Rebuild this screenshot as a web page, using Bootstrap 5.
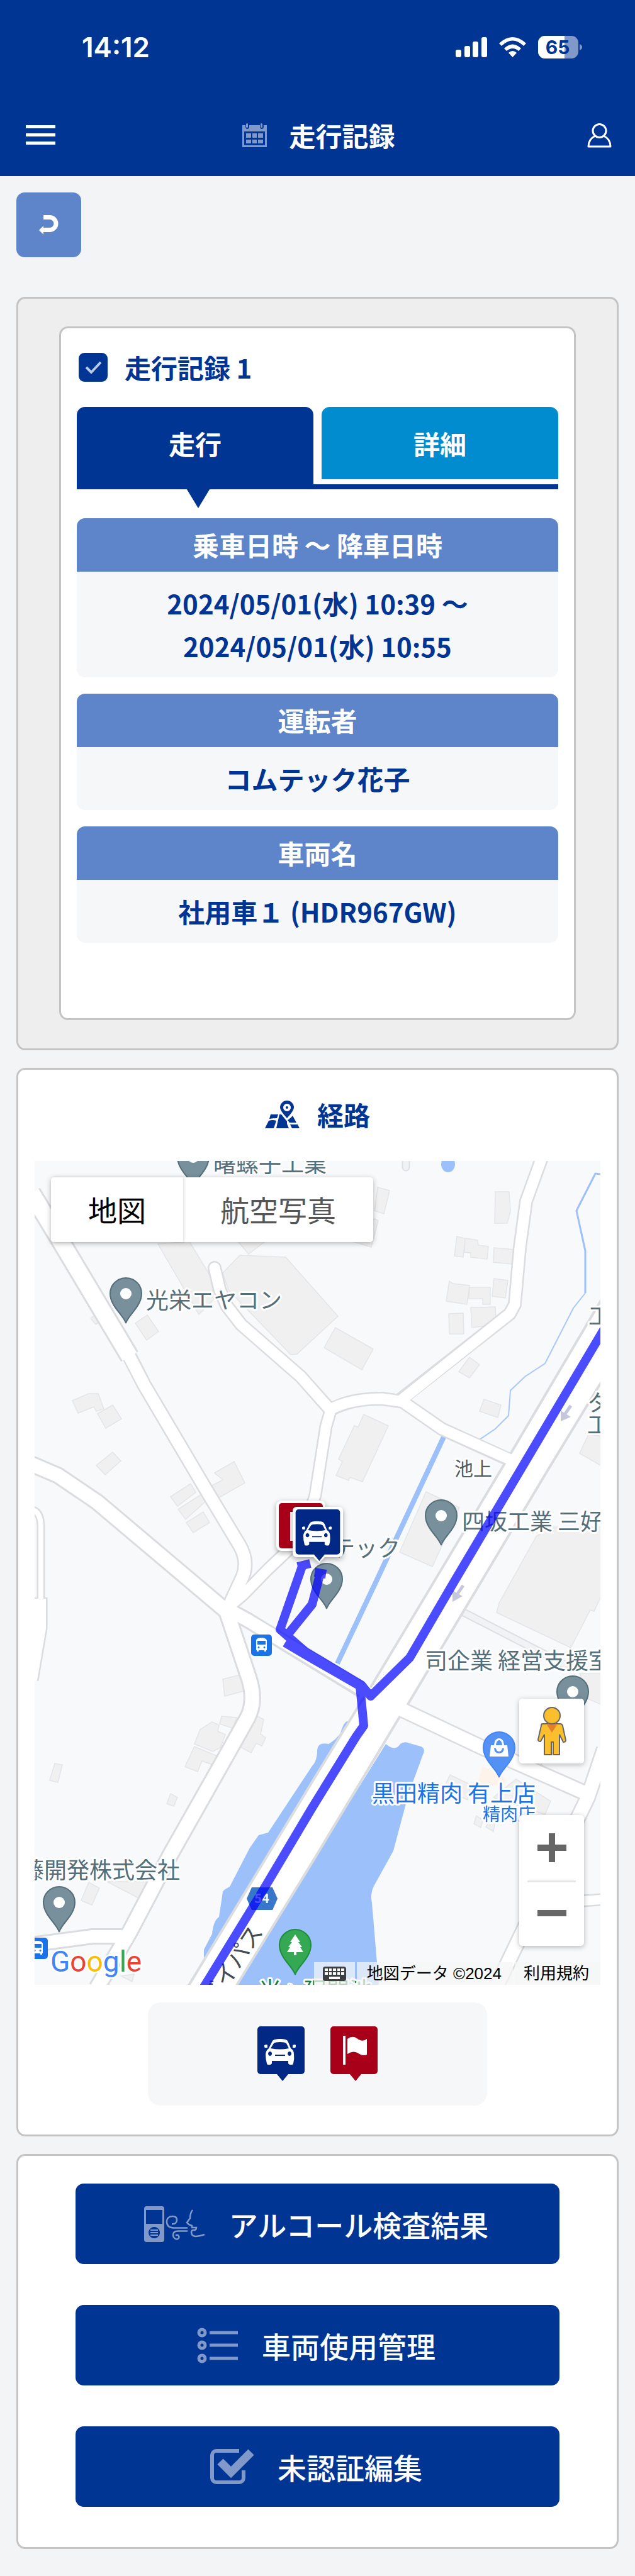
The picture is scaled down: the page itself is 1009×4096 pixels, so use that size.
<!DOCTYPE html>
<html lang="ja">
<head>
<meta charset="utf-8">
<meta name="viewport" content="width=device-width, initial-scale=1">
<title>走行記録</title>
<link href="https://cdn.jsdelivr.net/npm/bootstrap@5.3.0/dist/css/bootstrap.min.css" rel="stylesheet">
<style>
:root{--navy:#003594;--soft:#5e85ca;--line:#c4c4c4;--pale:#f5f7f9}
body{background:#f3f4f6;color:var(--navy);font-family:"Noto Sans CJK JP","Noto Sans",sans-serif;font-size:42px;line-height:68px}
svg{display:block;flex:none}
.topbar{background:var(--navy);color:#fff}
.status{height:150px;padding:0 84px 0 130px;font-family:Inter,sans-serif;font-size:44px;font-weight:600}
.status-icons{gap:19px}
.titlebar{height:130px;padding:0 37px 0 41px}
.titlebar .btn{padding:0;border:0;color:#fff;width:47px}
.title-group{gap:35px}
.ttl{font-size:42px;line-height:68px;font-weight:700;margin:0}
.faded{color:#8099c9}
main{padding:26px 26px 42px}
.btn-back{width:103px;height:103px;background:var(--soft);color:#fff;border-radius:13px;margin-bottom:63px}
.panel{border:3px solid var(--line);border-radius:14px;background:#fff;margin-bottom:28px;color:inherit}
.panel-gray{background:#eee;padding:44px 65px 45px}
.record{border:3px solid var(--line);border-radius:14px;background:#fff;padding:28px 25px 120px}
.record-head{gap:27px;padding-left:3px}
.record .form-check-input{width:46px;height:46px;margin:0;border:0;border-radius:9px;flex:none}
.record .form-check-input:checked{background-color:var(--navy);background-image:url("data:image/svg+xml,%3csvg xmlns='http://www.w3.org/2000/svg' viewBox='0 0 46 46'%3e%3cpath fill='none' stroke='%23b9c9e6' stroke-width='4' d='M12 23l8 8 15-16'/%3e%3c/svg%3e")}
.tabs{border-bottom:8px solid var(--navy);gap:13px;margin:29px 0 46px}
.tabs button{flex:1;height:115px;margin-bottom:8px;border:0;border-radius:13px 13px 0 0;background:#008ccf;color:#fff;font-weight:700;position:relative;padding:0}
.tabs button.active{height:123px;margin-bottom:0;background:var(--navy);padding-bottom:8px}
.tabs button.active::after{content:"";position:absolute;top:100%;left:50%;margin-left:-18px;border:solid transparent;border-width:38px 23px 0;border-top-color:var(--navy)}
.item{margin-bottom:26px;font-weight:700;text-align:center;border-radius:13px;overflow:hidden;background:var(--pale)}
.item:last-child{margin-bottom:0}
.item dt{background:var(--soft);color:#fff;padding:8px 0 9px}
.item dd{margin:0;padding:16px 0}
.route-head{height:145px;gap:28px;padding-bottom:4px}
.route{padding:0 26px 46px}
.gmap{overflow:hidden;line-height:1}
.gmap>svg{width:100%;height:auto}
.ctl{position:absolute;background:#fff;border-radius:5px;box-shadow:0 2px 8px rgba(0,0,0,.28);color:#666}
.ctl button{border:0;background:none;padding:0;color:inherit}
.types{left:26px;top:26px;height:103px;font-size:46px}
.types button{height:100%;padding:0 59px 4px;color:#565656}
.types button:first-child{color:#000;box-shadow:2px 0 4px rgba(0,0,0,.1)}
.pegman{right:26px;bottom:352px;width:103px;height:103px}
.zoomer{right:26px;bottom:62px;width:103px;height:208px}
.zoomer button{height:50%;width:100%}
.zoomer hr{position:absolute;left:13px;right:13px;top:50%;margin:0;border-top:3px solid #e6e6e6;opacity:1}
.legal{position:absolute;right:0;bottom:0;height:36px;gap:3px;font-family:"Liberation Sans","Noto Sans CJK JP",sans-serif;font-size:26px;line-height:36px;color:#000}
.legal>*{background:rgba(245,245,245,.72);color:#000;text-decoration:none;border:0}
.kbd-btn{width:65px;padding:0}
.legal span{padding:0 18px 0 16px}
.legal a{padding:0 18px 0 14px}
.legend-box{background:var(--pale);border-radius:20px;width:60%;margin-top:28px;padding:38px 0 39px;gap:41px}
.actions{padding:44px 91px 64px;gap:65px;margin-bottom:0}
.btn-act{background:var(--navy);color:#fff;height:128px;border-radius:13px;font-size:46px;font-weight:500;gap:38px;padding:0 4px 0 0}
.btn-act:hover,.btn-back:hover{background:var(--navy);color:#fff}
.lbl{font-size:36px;fill:#546e7a;font-weight:400;stroke:#fff;stroke-width:6px;stroke-linejoin:round;paint-order:stroke}
.lbl .area{font-size:30px;fill:#4f5b62}
.lbl .shop{fill:#1a73e8}
.lbl .shop-type{font-size:28px}
.lbl .park{fill:#188038}
.lbl .bypass{fill:#444b50}
.glogo{font-family:Roboto,sans-serif;font-size:46px;stroke:#fff;stroke-width:5px;paint-order:stroke}
.lift{filter:drop-shadow(0 3px 4px rgba(0,0,0,.35))}
.bld{fill:#f0f0f0;stroke:#e3e5e8;stroke-width:1.5}
.water{fill:#9cc0fa}
.road{fill:none;stroke-linejoin:round;stroke-linecap:butt}
</style>
<script src="https://cdn.jsdelivr.net/npm/bootstrap@5.3.0/dist/js/bootstrap.bundle.min.js"></script>
</head>
<body>
<svg width="0" height="0" class="position-absolute" aria-hidden="true">
<defs>
<symbol id="box-pin" viewBox="0 0 75 87"><path d="M5 0h65a5 5 0 0 1 5 5v66a5 5 0 0 1-5 5H49L40 87 31 76H5a5 5 0 0 1-5-5V5a5 5 0 0 1 5-5z"/></symbol>
<symbol id="car" viewBox="0 0 75 87"><path fill="#fff" fill-rule="evenodd" d="M27 21q9-2 18 0 3 1 4 4l4 10q5 3 5 9 1 8-1 15 0 2-2 2h-3q-2 0-3-2v-4H23v4q-1 2-3 2h-3q-2 0-2-2-2-7-2-15 1-6 5-9l5-10q1-3 4-4zm-1 6-5 8q15 3 29 0l-4-8q-2-2-10-2t-10 2zM20 40a3 3.500 0 1 0 .1 0zm31 0a3 3.500 0 1 0 .1 0zM28 45v2h16v-2zM11 30q4-2 5 0v4h-4q-1 0-1-4zm45 0q4-2 5 0 0 4-1 4h-4z"/></symbol>
<symbol id="flag" viewBox="0 0 75 87"><path fill="#fff" d="M20 15h4v46h-4zM27 20q8-6 15-1 9 7 16 1v25q-7 3-15-3-8-4-16 2z"/></symbol>
<symbol id="pin" viewBox="-28 -75 56 77" overflow="visible"><path stroke-width="2" d="M0 0C-3-12-25-27-25-47a25 25 0 0 1 50 0C25-27 3-12 0 0z"/></symbol>
<symbol id="bus" viewBox="0 0 33 34"><rect width="33" height="34" rx="5" fill="#1a73e8"/><path fill="#fff" fill-rule="evenodd" d="M8 9q1-4 8-4t9 4v15q0 1-1 1v2h-3v-2h-9v2H9v-2q-1 0-1-1zm2 1v6h13v-6zm2 9a1.500 1.500 0 1 0 .1 0zm9 0a1.500 1.500 0 1 0 .1 0z"/></symbol>
</defs>
</svg>

<header class="topbar">
  <div class="status d-flex align-items-center justify-content-between">
    <span>14:12</span>
    <div class="status-icons d-flex align-items-center">
      <svg width="50" height="32" fill="#fff"><rect y="20" width="9" height="12" rx="3"/><rect x="14" y="14" width="9" height="18" rx="3"/><rect x="27" y="7" width="9" height="25" rx="3"/><rect x="41" width="9" height="32" rx="3"/></svg>
      <svg width="43" height="32" fill="#fff"><path d="M21.500 32 15 25q6.500-6 13 0zM8 18q13.500-13 27 0l-4 4q-9.500-8-19 0zM0 10Q21.500-10 43 10l-4 4Q21.500-3 4 14z"/></svg>
      <svg width="70" height="36"><defs><clipPath id="cell"><rect width="64" height="36" rx="11"/></clipPath></defs><g clip-path="url(#cell)"><path fill="#8099c9" d="M0 0h64v36H0z"/><path fill="#fff" d="M0 0h42v36H0z"/></g><path fill="#8099c9" d="M66 13q4 2 4 5t-4 5z"/><text x="31" y="29" text-anchor="middle" font-size="30" font-weight="700" fill="#003594">65</text></svg>
    </div>
  </div>
  <div class="titlebar d-flex align-items-center justify-content-between">
    <button class="btn" type="button" aria-label="メニュー"><svg width="47" height="32" fill="currentColor"><path d="M0 0h47v5H0zM0 13h47v5H0zM0 26h47v5H0z"/></svg></button>
    <div class="title-group d-flex align-items-center">
      <svg class="faded" width="39" height="38" fill="currentColor"><path fill-rule="evenodd" d="M0 3h5v2q0 4 3 4t3-4V3h17v2q0 4 3 4t3-4V3h5v35H0zm3 10v22h33V13z"/><rect x="6" width="3" height="7" rx="1.500"/><rect x="29" width="3" height="7" rx="1.500"/><path d="M6 16h8v7H6zm10 0h7v7h-7zm9 0h8v7h-8zM6 26h8v6H6zm10 0h7v6h-7zm9 0h8v6h-8z"/></svg>
      <h1 class="ttl">走行記録</h1>
    </div>
    <button class="btn d-flex justify-content-end" type="button" aria-label="アカウント"><svg width="39" height="39" fill="none" stroke="currentColor" stroke-width="3"><ellipse cx="19.500" cy="12" rx="10.500" ry="10.500"/><path d="M13 20Q2 25 2 37h35q0-12-11-17" stroke-linejoin="round"/></svg></button>
  </div>
</header>

<main>
  <button class="btn btn-back d-flex align-items-center justify-content-center" type="button" aria-label="戻る"><svg width="31" height="31"><path d="M7 3.500h10a10 10 0 0 1 0 20H7" fill="none" stroke="#fff" stroke-width="7"/><path d="m0 24 7-7v14z" fill="#fff"/></svg></button>

  <section class="panel panel-gray">
    <div class="record">
      <div class="record-head d-flex align-items-center">
        <input class="form-check-input" type="checkbox" id="rec1" checked>
        <label class="ttl" for="rec1">走行記録 1</label>
      </div>
      <div class="tabs d-flex" role="tablist">
        <button class="active" type="button" role="tab" aria-selected="true">走行</button>
        <button type="button" role="tab" aria-selected="false">詳細</button>
      </div>
      <dl class="item"><dt>乗車日時 〜 降車日時</dt><dd>2024/05/01(水) 10:39 〜<br>2024/05/01(水) 10:55</dd></dl>
      <dl class="item"><dt>運転者</dt><dd>コムテック花子</dd></dl>
      <dl class="item"><dt>車両名</dt><dd>社用車１ (HDR967GW)</dd></dl>
    </div>
  </section>

  <section class="panel route">
    <div class="route-head d-flex align-items-center justify-content-center">
      <svg width="55" height="44" fill="#003594"><path fill-rule="evenodd" d="M35 28Q24 16 24 11a11 11 0 0 1 22 0q0 5-11 17zm0-23a6 6 0 1 0 .1 0zm0 4a2 2 0 1 1-.1 0z"/><path d="M9 22h12l-2 6q-6 0-12 1zM6 32q6-2 12 0l-4 12H0zM23 22h3l9 11v4l3 7H18zM44 24l6 11H39l-3-4q4-2 8-7zM40 38h12l3 6H43z"/></svg>
      <h2 class="ttl">経路</h2>
    </div>
    <div class="gmap position-relative">
      <svg viewBox="0 0 899 1310" role="img" aria-label="走行経路の地図">
        <rect width="899" height="1310" fill="#f8f9fb"/>
        <g class="bld">
          <path d="M299 178 326 150 399 153 482 247 417 307 407 308 308 205zM196 132 246 128 281 186 284 221 261 244zM323 128 340 148 366 128zM160 258 179 245 197 271 178 285zM89 250 99 243 107 254 97 260zM60 381 86 370 101 370 110 394 98 398 94 391 69 401zM100 402 124 388 138 410 113 425zM98 484 124 463 137 477 112 499zM216 534 248 513 256 527 227 549zM228 554 265 530 272 541 240 570zM241 575 268 558 278 575 252 591zM286 496 317 478 334 512 292 536 282 516 299 507z"/>
          <path d="M540 79 545 42 564 47 555 84zM540 92 546 95 535 137 509 129zM732 49H754L756 80 751 99H731zM671 120 684 123 681 153 667 151zM684 123 704 126 705 134 721 136 719 156 693 153V146L683 145zM730 138 762 141 758 164 729 161zM659 191 665 195 691 198 687 228 654 223zM691 201H724V228H712V219H690zM730 187 752 190 748 218 727 215zM658 243 681 242 682 275H659zM693 233 732 232 733 260 695 265zM478 265 538 299 520 332 460 297zM691 312 707 324 691 345 674 335zM714 379 741 388 736 408 707 398zM523 403 562 421 521 510 501 503 499 508 479 500 489 478 483 474 508 421 514 423zM622 526 675 551 632 645 580 622zM880 435 899 437V484L866 465zM797 597 820 582H899V694L889 716 883 714 852 774 734 718 738 703z"/>
          <path d="M299 824 327 817 332 843 302 851zM254 927 263 904 282 892 293 897 291 907 303 912 295 933 283 939zM294 895 297 883 321 885 315 902zM239 963 254 931 294 948 288 962 266 954 259 971zM327 932 354 883 364 888 359 911 367 917 361 930 352 926 344 941zM24 985 32 958 44 960 37 988zM210 1022 216 1006 227 1012 221 1026zM74 1176 86 1147 103 1156 91 1183zM115 1146H182L169 1174zM137 1296 158 1293 155 1305zM660 976 693 992 688 1016 650 998zM765 983 820 1018 811 1039 729 1012zM702 1041 712 1048 709 1060 698 1054zM725 1045 732 1050 729 1066 717 1059zM866 815H899V864L879 855z"/>
        </g>
        <path fill="#fef3ea" d="M712 962 750 983 745 994 703 990z"/>
        <g class="water">
          <path d="M558 927Q573 940 581 927 588 922 596 926L614 931Q622 935 617 944L594 1007 570 1097 549 1135 539 1153Q533 1165 536 1180L547 1310H322L440 1117z"/>
          <path d="M500 891Q492 888 486 910 478 921 467 927 448 923 449 940 448 955 441 962L371 1068 356 1072 342 1092 310 1154Q300 1159 299 1162L293 1202Q284 1208 282 1229L269 1254V1269L440 989z"/>
          <ellipse cx="657" cy="5" rx="11" ry="13"/>
          <path fill="none" stroke="#9cc0fa" stroke-width="8" d="M650 439 542 670 481 799"/>
          <path fill="none" stroke="#9cc0fa" stroke-width="3" d="M899 21 891 20 861 79 875 143V210"/>
          <path fill="none" stroke="#a8c8fb" stroke-width="2" d="M875 210 856 234 811 322 779 343 756 365 753 405 732 426 707 443"/>
        </g>
        <g fill="none" stroke="#dcdfe3"><path stroke-width="13" stroke-linecap="round" d="M657 705 843 801M590-5V10M796 968 803 950"/><path stroke="#f1f2f4" stroke-width="9" stroke-linecap="round" d="M657 705 843 801M590-5V10M796 968 803 950"/></g>
        <g class="road" stroke="#dadce0">
          <path stroke-width="32" d="M-5 51 40 125 151 311"/>
          <path stroke-width="24" d="M151 311 174 356 272 522 325 610Q340 635 331 660L305 716"/>
          <path stroke-width="28" d="M-5 482 37 500 99 542 305 716 341 824Q352 860 338 886L305 945 214 1106 151 1226 99 1315"/>
          <path stroke-width="26" d="M305 712 338 730 521 842M-5 1246 92 1233H150"/>
          <path stroke-width="21" d="M305 712 331 690 371 649 426 597 446 531 463 422 470 398"/>
          <path stroke-width="22" stroke-linecap="round" d="M286 170 294 204 305 230 328 260 423 343 470 396"/>
          <path stroke-width="22" d="M470 396Q500 378 552 378 568 380 585 383L647 426 752 474M578 382 755 243 763 228 771 138 781 64 806-5"/>
          <path stroke-width="13" d="M-3 555Q9 558 10 580V694"/>
          <path stroke-width="23" d="M9 694V743L-5 825"/>
          <path stroke-width="26" d="M585 873 712 933 875 1005M905 935 879 1012 771 1235 735 1310"/>
          <path stroke-width="20" d="M905 1174 850 1178"/>
          <path stroke-width="4" fill="#fff" d="M905 213 756 466 634 670 535 835 522 855 440 989 243 1314H319L440 1117 580 884 593 864 709 670 814 494 905 344z"/>
        </g>
        <g class="road" stroke="#fff">
          <path stroke-width="26" d="M-5 51 40 125 151 311"/>
          <path stroke-width="19" d="M148 306 174 356 272 522 325 610Q340 635 331 660L305 716"/>
          <path stroke-width="22" d="M-5 482 37 500 99 542 305 716 341 824Q352 860 338 886L305 945 214 1106 151 1226 99 1315"/>
          <path stroke-width="20" d="M305 712 338 730 540 852M-5 1246 92 1233H155"/>
          <path stroke-width="16" d="M305 712 331 690 371 649 426 597 446 531 463 422 470 398"/>
          <path stroke-width="17" stroke-linecap="round" d="M286 170 294 204 305 230 328 260 423 343 470 396"/>
          <path stroke-width="17" d="M468 396Q500 378 552 378 568 380 585 383L647 426 765 479M578 384 755 243 763 228 771 138 781 64 806-5"/>
          <path stroke-width="8" d="M-3 555Q9 558 10 580V700"/>
          <path stroke-width="18" d="M9 696V743L-5 825"/>
          <path stroke-width="21" d="M570 866 712 933 875 1005M905 935 879 1012 771 1235 735 1310"/>
          <path stroke-width="15" d="M905 1174 850 1178"/>
        </g>
        <g fill="#c5c8dc" stroke="#c5c8dc"><path stroke-width="5" d="M852 389 843 402M681 675 672 688"/><path stroke="none" d="M836 397 852 407 836 414zM664 683 680 692 664 701z"/></g>

        <g fill="#78909c" stroke="#546e7a">
          <use href="#pin" x="117" y="183" width="56" height="77"/><use href="#pin" x="224" y="-34" width="56" height="77"/><use href="#pin" x="618" y="536" width="56" height="77"/><use href="#pin" x="436" y="637" width="56" height="77"/><use href="#pin" x="827" y="816" width="56" height="77"/><use href="#pin" x="11" y="1151" width="56" height="77"/>
        </g>
        <g fill="#fff"><circle cx="145" cy="211" r="9"/><circle cx="252" cy="-6" r="9"/><circle cx="646" cy="564" r="9"/><circle cx="464" cy="665" r="9"/><circle cx="855" cy="844" r="9"/><circle cx="39" cy="1179" r="9"/></g>
        <use href="#pin" x="710" y="905" width="56" height="77" fill="#5491f5" stroke="#4285f4"/>
        <path fill="#fff" fill-rule="evenodd" d="M725 929h5q1-11 8-11t8 11h5l2 18h-30zm8 0h10q-1-8-5-8t-5 8zm-3 5q1 8 8 8t8-8h-3q-1 5-5 5t-5-5z"/>
        <use href="#pin" x="386" y="1219" width="56" height="77" fill="#34a853" stroke="#1e8e3e"/>
        <path fill="#fff" d="M414 1230l8 12h-3l6 8h-3l5 8h-11v5h-4v-5h-11l5-8h-3l6-8h-3z"/>
        <use href="#bus" x="344" y="753" width="33" height="34"/><use href="#bus" x="-12" y="1235" width="33" height="34"/>
        <path fill="#3876c9" d="M337 1173 345 1155H378L386 1173 378 1191H345z"/>
        <text x="361" y="1180" text-anchor="middle" font-size="20" font-weight="700" fill="#fff">54</text>
        <g class="lbl">
          <text x="177" y="235">光栄エヤコン</text><text x="284" y="18">曙螺子工業</text><text x="880" y="260">工</text><text x="878" y="398">タ</text><text x="878" y="433">工</text>
          <text x="679" y="587">四坂工業 三好</text><text x="473" y="629">テック</text><text x="620" y="808">司企業 経営支援室</text><text x="-21" y="1141">藤開発株式会社</text>
          <text class="area" x="667" y="500">池上</text>
          <text class="shop" x="536" y="1019">黒田精肉 有上店</text><text class="shop shop-type" x="712" y="1049">精肉店</text>
          <text class="park" x="356" y="1332">米ヶ廻間池</text>
          <text class="bypass" transform="translate(286 1346) rotate(-57)">バイパス</text>
        </g>
        <g fill="none" stroke="#00f" stroke-width="14" stroke-linejoin="round" opacity=".7">
          <path d="M426 642 390 745 430 780 519 833 534 851 596 790 666 670 905 267"/>
          <path d="M418 645 438 640M445 654 463 657M454 655 441 705 403 752M398 766 430 785 517 835 523 898 511 915 440 1030 358 1168 268 1315"/>
        </g>
        <rect class="lift" x="384" y="540" width="78" height="80" rx="8" fill="#fff"/><rect x="388" y="544" width="70" height="72" rx="5" fill="#a90019"/><path fill="#fff" d="M406 558h5v46h-5z"/>
        <path class="lift" fill="#fff" d="M410 557q0-7 7-7h66q7 0 7 7v66q0 7-7 7h-22l-9 9-9-9h-26q-7 0-7-7z"/>
        <use href="#box-pin" x="414" y="554" width="72" height="82" fill="#002884"/><use href="#car" x="414" y="554" width="72" height="82"/>
        <text class="glogo" x="25" y="1289" fill="#4285f4">G<tspan fill="#ea4335">o</tspan><tspan fill="#fbbc05">o</tspan>g<tspan fill="#34a853">l</tspan><tspan fill="#ea4335">e</tspan></text>
      </svg>
      <div class="ctl types d-flex"><button type="button">地図</button><button type="button">航空写真</button></div>
      <button type="button" class="ctl pegman border-0 p-0 d-flex align-items-center justify-content-center" aria-label="ストリートビュー"><svg width="46" height="78" stroke="#666" stroke-width="2"><path fill="#fbbf2d" d="M8 27h28q3 0 4 3l5 23q0 3-4 3l-6-12v32H25V56h-3v20H11V44L5 55q-4 0-4-3l5-22q0-3 2-3z"/><path fill="#e2802d" stroke="none" d="M14 27h18l-9 14z"/><circle cx="23" cy="14" r="13" fill="#fbbf2d"/></svg></button>
      <div class="ctl zoomer"><button type="button" aria-label="拡大" class="d-flex align-items-center justify-content-center"><svg width="46" height="46" fill="currentColor"><path d="M18 0h10v18h18v10H28v18H18V28H0V18h18z"/></svg></button><hr><button type="button" aria-label="縮小" class="d-flex align-items-center justify-content-center"><svg width="46" height="10" fill="currentColor"><path d="M0 0h46v10H0z"/></svg></button></div>
      <div class="legal d-flex"><button type="button" class="kbd-btn d-flex align-items-center justify-content-center" aria-label="キーボード ショートカット"><svg width="37" height="23"><rect width="37" height="23" rx="4" fill="#3c4043"/><path fill="#fff" d="M3 3h5v4H3zm7 0h4v4h-4zm6 0h5v4h-5zm7 0h4v4h-4zm6 0h5v4h-5zM3 9h5v4H3zm7 0h4v4h-4zm6 0h5v4h-5zm7 0h4v4h-4zm6 0h5v4h-5zM10 16h17v4H10z"/></svg></button><span>地図データ ©2024</span><a href="#">利用規約</a></div>
    </div>
    <div class="legend-box mx-auto d-flex justify-content-center">
      <svg width="75" height="87"><use href="#box-pin" width="75" height="87" fill="#002884"/><use href="#car" width="75" height="87"/></svg>
      <svg width="75" height="87"><use href="#box-pin" width="75" height="87" fill="#a90019"/><use href="#flag" width="75" height="87"/></svg>
    </div>
  </section>

  <section class="panel actions d-flex flex-column">
    <button class="btn btn-act d-flex align-items-center justify-content-center" type="button"><svg class="faded" width="97" height="57" fill="none" stroke="currentColor" stroke-width="2.500"><path fill="currentColor" stroke="none" fill-rule="evenodd" d="M4 0h24q4 0 4 4v49q0 4-4 4H4q-4 0-4-4V4q0-4 4-4zM3 6v22h26V6zm13 27a9 9 0 1 0 .1 0z"/><path stroke-width="2" d="M10 38h12M10 42h12M10 46h12"/><path d="M69 34.500H47C38 34 36 29 36 25c0-6 4-9 9-9 4 0 7 2 7 6s-3 7-8 6M69 39.500H54c-5 0-8 2-8 6s3 7 6 7 4-3 3-5-3-2-5-1M77 6q-4 5-4 13l-5 7q3 4 8 5v3h7q0 4-4 4-4 0-4 3 0 6 6 7 6 0 15-3"/></svg>アルコール検査結果</button>
    <button class="btn btn-act d-flex align-items-center justify-content-center" type="button"><svg class="faded" width="65" height="57" fill="none" stroke="currentColor" stroke-width="5"><circle cx="8" cy="8" r="5"/><circle cx="8" cy="28" r="5"/><circle cx="8" cy="49" r="5"/><path d="M20 8h45M20 28h45M20 49h45"/></svg>車両使用管理</button>
    <button class="btn btn-act d-flex align-items-center justify-content-center" type="button"><svg class="faded" width="69" height="56" fill="none" stroke="currentColor"><path stroke-width="6" d="M46 3H10a7 7 0 0 0-7 7v36a7 7 0 0 0 7 7h36a7 7 0 0 0 7-7V34"/><path stroke-width="13" d="M16 20 33 37 65 5"/></svg>未認証編集</button>
  </section>
</main>
</body>
</html>
